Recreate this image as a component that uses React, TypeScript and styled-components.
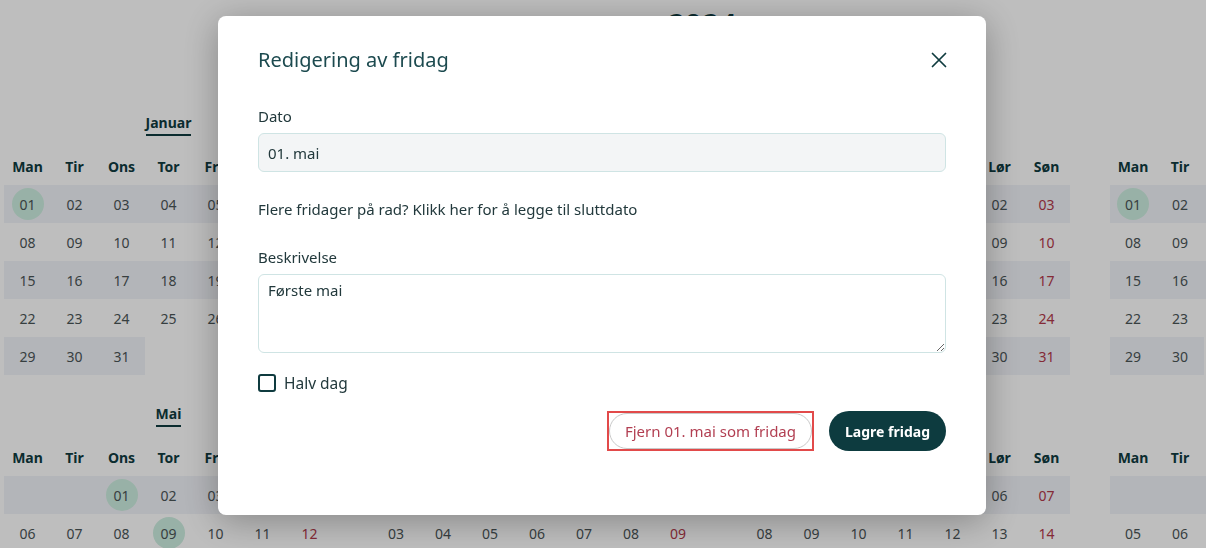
import React from 'react';
import styled, { createGlobalStyle } from 'styled-components';

const GlobalStyle = createGlobalStyle`
  *, *::before, *::after { box-sizing: border-box; }
  html, body { margin: 0; padding: 0; background: #ffffff; }
  body {
    width: 1206px;
    height: 548px;
    overflow: hidden;
    font-family: "Noto Sans", "Open Sans", sans-serif;
    color: #22393c;
  }
`;

const Page = styled.div`
  width: 1400px;
  padding-left: 4px;
`;

const YearTitle = styled.h1`
  margin: 0;
  padding-top: 5px;
  height: 45px;
  font-size: 30px;
  line-height: 40px;
  font-weight: 700;
  text-align: center;
  color: #0f3b3f;
`;

const MonthGrid = styled.div`
  margin-top: 67px;
  display: grid;
  grid-template-columns: repeat(4, 329px);
  column-gap: 39.5px;
  row-gap: 28px;
`;

const MonthBlock = styled.section`
  display: flex;
  flex-direction: column;
`;

const MonthHead = styled.div`
  display: flex;
  justify-content: center;
  height: 24px;
  margin-bottom: 11px;
`;

const MonthName = styled.span`
  font-size: 14px;
  font-weight: 700;
  line-height: 22px;
  color: #0f3b3f;
  border-bottom: 2px solid #0f3b3f;
`;

const WeekGrid = styled.div`
  display: grid;
  grid-template-columns: repeat(7, 47px);
  grid-auto-rows: 38px;
`;

const WeekdayCell = styled.div`
  display: flex;
  align-items: center;
  justify-content: center;
  font-size: 14px;
  font-weight: 700;
  color: #0f3b3f;
`;

const DayCell = styled.div<{ $shaded: boolean }>`
  display: flex;
  align-items: center;
  justify-content: center;
  background: ${p => (p.$shaded ? '#f1f3f8' : 'transparent')};
`;

const DayNumber = styled.span<{ $holiday: boolean; $sunday: boolean }>`
  width: 32px;
  height: 32px;
  border-radius: 50%;
  display: flex;
  align-items: center;
  justify-content: center;
  font-size: 14px;
  color: ${p => (p.$sunday ? '#b2394a' : '#4b5557')};
  background: ${p => (p.$holiday ? '#cdeee0' : 'transparent')};
`;

const Overlay = styled.div`
  position: fixed;
  inset: 0;
  background: rgba(0, 0, 0, 0.255);
`;

const Modal = styled.div`
  position: fixed;
  top: 16px;
  left: 218px;
  width: 768px;
  background: #ffffff;
  border-radius: 8px;
  padding: 30px 40px 64px;
  box-shadow: 0 6px 36px rgba(0, 0, 0, 0.3);
  display: flex;
  flex-direction: column;
`;

const ModalHeader = styled.div`
  display: flex;
  align-items: center;
  justify-content: space-between;
  height: 28px;
  margin-bottom: 31px;
`;

const ModalTitle = styled.h2`
  margin: 0;
  font-size: 20px;
  font-weight: 400;
  line-height: 28px;
  color: #1c4a4f;
`;

const CloseButton = styled.button`
  border: 0;
  background: none;
  padding: 0;
  width: 16px;
  height: 16px;
  margin-right: -1px;
  display: flex;
  align-items: center;
  justify-content: center;
  cursor: pointer;
`;

const FieldLabel = styled.label`
  font-size: 15px;
  line-height: 22px;
  color: #22393c;
  margin-bottom: 6px;
`;

const TextInput = styled.input`
  height: 39px;
  width: 100%;
  border: 1px solid #cfe4e4;
  border-radius: 6px;
  background: #f3f5f6;
  padding: 0 9px;
  font-family: inherit;
  font-size: 15px;
  color: #22393c;
  margin-bottom: 26px;
  outline: none;
`;

const HintText = styled.p`
  margin: 0 0 26px;
  font-size: 15px;
  line-height: 22px;
  color: #22393c;
`;

const TextArea = styled.textarea`
  height: 79px;
  width: 100%;
  border: 1px solid #cfe4e4;
  border-radius: 6px;
  background: #ffffff;
  padding: 4px 9px;
  font-family: inherit;
  font-size: 15px;
  line-height: 22px;
  color: #22393c;
  margin: 0 0 21px;
  outline: none;
`;

const CheckRow = styled.label`
  display: flex;
  align-items: center;
  gap: 8px;
  height: 18px;
  font-size: 15.5px;
  color: #22393c;
  margin-bottom: 19px;
`;

const CheckBox = styled.input`
  appearance: none;
  margin: 0;
  width: 18px;
  height: 18px;
  border: 2px solid #0f3b3f;
  border-radius: 3px;
  background: #fff;
`;

const Actions = styled.div`
  display: flex;
  justify-content: flex-end;
  align-items: center;
  gap: 15px;
`;

const FocusFrame = styled.span`
  display: flex;
  border: 2px solid #e24a4a;
`;

const RemoveButton = styled.button`
  height: 36px;
  padding: 0 15px;
  border-radius: 18px;
  border: 1px solid #c9c9c9;
  background: #ffffff;
  font-family: inherit;
  font-size: 15px;
  color: #b23f52;
  cursor: pointer;
`;

const SaveButton = styled.button`
  height: 40px;
  padding: 0 16px;
  border-radius: 20px;
  border: 0;
  background: #0d3b3f;
  font-family: inherit;
  font-size: 14px;
  font-weight: 700;
  color: #ffffff;
  cursor: pointer;
`;

const WEEKDAYS = ['Man', 'Tir', 'Ons', 'Tor', 'Fre', 'Lør', 'Søn'];
const MONTHS = ['Januar', 'Februar', 'Mars', 'April', 'Mai', 'Juni', 'Juli', 'August'];
const HOLIDAYS: Record<number, number[]> = {
  0: [1],
  2: [28, 29],
  3: [1],
  4: [1, 9, 17, 20],
};

const pad = (n: number) => (n < 10 ? `0${n}` : `${n}`);

function Month({ index }: { index: number }) {
  const first = new Date(2024, index, 1).getDay();
  const offset = (first + 6) % 7;
  const days = new Date(2024, index + 1, 0).getDate();
  const cells: { day: number | null; pos: number }[] = [];
  for (let i = 0; i < offset; i++) cells.push({ day: null, pos: i });
  for (let d = 1; d <= days; d++) cells.push({ day: d, pos: offset + d - 1 });
  return (
    <MonthBlock>
      <MonthHead>
        <MonthName>{MONTHS[index]}</MonthName>
      </MonthHead>
      <WeekGrid>
        {WEEKDAYS.map(w => (
          <WeekdayCell key={w}>{w}</WeekdayCell>
        ))}
        {cells.map(c => {
          const row = Math.floor(c.pos / 7);
          const col = c.pos % 7;
          return (
            <DayCell key={c.pos} $shaded={row % 2 === 0}>
              {c.day !== null && (
                <DayNumber
                  $sunday={col === 6}
                  $holiday={(HOLIDAYS[index] || []).includes(c.day)}
                >
                  {pad(c.day)}
                </DayNumber>
              )}
            </DayCell>
          );
        })}
      </WeekGrid>
    </MonthBlock>
  );
}

export default function App() {
  return (
    <>
      <GlobalStyle />
      <Page>
        <YearTitle>2024</YearTitle>
        <MonthGrid>
          {MONTHS.map((_, i) => (
            <Month key={i} index={i} />
          ))}
        </MonthGrid>
      </Page>
      <Overlay />
      <Modal>
        <ModalHeader>
          <ModalTitle>Redigering av fridag</ModalTitle>
          <CloseButton aria-label="Lukk">
            <svg width="16" height="16" viewBox="0 0 16 16">
              <path d="M1.5 1.5 L14.5 14.5 M14.5 1.5 L1.5 14.5" stroke="#0f3b3f" strokeWidth="1.75" strokeLinecap="round" />
            </svg>
          </CloseButton>
        </ModalHeader>
        <FieldLabel>Dato</FieldLabel>
        <TextInput readOnly value="01. mai" />
        <HintText>Flere fridager på rad? Klikk her for å legge til sluttdato</HintText>
        <FieldLabel>Beskrivelse</FieldLabel>
        <TextArea defaultValue="Første mai" />
        <CheckRow>
          <CheckBox type="checkbox" />
          Halv dag
        </CheckRow>
        <Actions>
          <FocusFrame>
            <RemoveButton>Fjern 01. mai som fridag</RemoveButton>
          </FocusFrame>
          <SaveButton>Lagre fridag</SaveButton>
        </Actions>
      </Modal>
    </>
  );
}
